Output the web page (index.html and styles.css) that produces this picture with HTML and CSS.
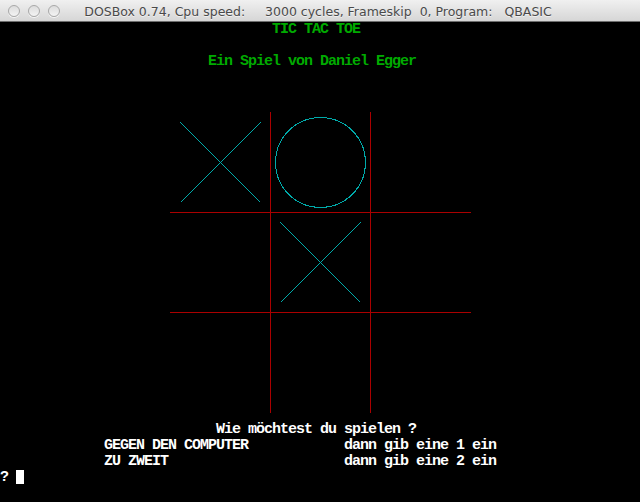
FILE: index.html
```html
<!DOCTYPE html>
<html>
<head>
<meta charset="utf-8">
<title>DOSBox</title>
<link rel="stylesheet" href="styles.css">
</head>
<body>
<div class="window">
  <div class="titlebar">
    <div class="lights">
      <span class="light"></span>
      <span class="light"></span>
      <span class="light"></span>
    </div>
    <div class="title">DOSBox 0.74, Cpu speed:     3000 cycles, Frameskip  0, Program:   QBASIC</div>
  </div>
  <div class="screen">
    <svg class="gfx" width="640" height="480" viewBox="0 0 640 480" shape-rendering="crispEdges">
      <g stroke="#aa0000" stroke-width="1">
        <line x1="270.5" y1="90" x2="270.5" y2="391"/>
        <line x1="370.5" y1="90" x2="370.5" y2="391"/>
        <line x1="170" y1="190.5" x2="471" y2="190.5"/>
        <line x1="170" y1="290.5" x2="471" y2="290.5"/>
      </g>
      <g stroke="#00aaaa" stroke-width="1" fill="none">
        <line x1="180.5" y1="100.5" x2="260.5" y2="180.5"/>
        <line x1="260.5" y1="100.5" x2="180.5" y2="180.5"/>
        <circle cx="320.5" cy="140.5" r="45"/>
        <line x1="280.5" y1="200.5" x2="360.5" y2="280.5"/>
        <line x1="360.5" y1="200.5" x2="280.5" y2="280.5"/>
      </g>
    </svg>
    <div class="text">
      <div class="row green">                                  TIC TAC TOE</div>
      <div class="row"> </div>
      <div class="row green">                          Ein Spiel von Daniel Egger</div>
      <div class="gap"></div>
      <div class="row white">                           Wie möchtest du spielen ?</div>
      <div class="row white">             GEGEN DEN COMPUTER            dann gib eine 1 ein</div>
      <div class="row white">             ZU ZWEIT                      dann gib eine 2 ein</div>
      <div class="row white">? <span class="cursor"></span></div>
    </div>
  </div>
</div>
</body>
</html>
```
FILE: styles.css
```css
html, body {
  margin: 0;
  padding: 0;
  background: #000;
}
.window {
  width: 640px;
  height: 502px;
  display: flex;
  flex-direction: column;
  overflow: hidden;
}
.titlebar {
  height: 21px;
  border-bottom: 1px solid #6e6e6e;
  background: linear-gradient(#f0f0f0, #d6d6d6);
  display: flex;
  align-items: center;
  position: relative;
}
.lights {
  display: flex;
  gap: 8px;
  padding-left: 8px;
  padding-top: 1px;
}
.light {
  width: 10px;
  height: 10px;
  border-radius: 50%;
  border: 1px solid #a8a8a8;
  background: linear-gradient(#dcdcdc, #f4f4f4);
  box-shadow: 0 1px 0 rgba(255,255,255,0.7);
}
.title {
  flex: 1;
  text-align: center;
  white-space: pre;
  font-family: "DejaVu Sans", "Liberation Sans", sans-serif;
  font-size: 12.5px;
  color: #4a4a4a;
  padding-right: 64px;
  padding-top: 1px;
  text-shadow: 0 1px 0 rgba(255,255,255,0.6);
}
.screen {
  width: 640px;
  height: 480px;
  background: #000;
  position: relative;
}
.gfx {
  position: absolute;
  left: 0;
  top: 0;
  display: block;
}
.text {
  position: relative;
  display: flex;
  flex-direction: column;
}
.row {
  height: 16px;
  line-height: 16px;
  white-space: pre;
  font-family: "Liberation Mono", "DejaVu Sans Mono", monospace;
  font-size: 15px;
  letter-spacing: -1px;
  font-weight: bold;
  overflow: hidden;
}
.gap {
  height: 352px;
}
.green {
  color: #00aa00;
}
.white {
  color: #ffffff;
}
.cursor {
  display: inline-block;
  width: 8px;
  height: 14px;
  background: #ffffff;
  vertical-align: -3px;
}
```
